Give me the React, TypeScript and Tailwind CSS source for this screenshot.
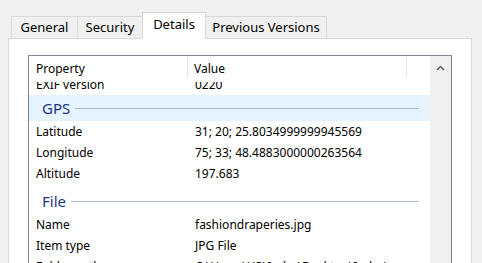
import React from "react";

const font = { fontFamily: '"Noto Sans", "Liberation Sans", sans-serif' };

type Row = { kind: "item"; label: string; value: string } | { kind: "group"; label: string; hover?: boolean; gap?: boolean };

const rows: Row[] = [
  { kind: "item", label: "EXIF version", value: "0220" },
  { kind: "group", label: "GPS", hover: true },
  { kind: "item", label: "Latitude", value: "31; 20; 25.8034999999945569" },
  { kind: "item", label: "Longitude", value: "75; 33; 48.4883000000263564" },
  { kind: "item", label: "Altitude", value: "197.683" },
  { kind: "group", label: "File", gap: true },
  { kind: "item", label: "Name", value: "fashiondraperies.jpg" },
  { kind: "item", label: "Item type", value: "JPG File" },
  { kind: "item", label: "Folder path", value: "C:\\Users\\HP\\Indra\\Desktop\\Indra's" },
];

function Tab({ label, className }: { label: string; className: string }) {
  return (
    <div className={`flex items-center justify-center border-[#d9d9d9] text-[13px] text-black ${className}`}>
      {label}
    </div>
  );
}

function GroupRow({ row }: { row: Extract<Row, { kind: "group" }> }) {
  return (
    <div className={row.gap ? "pt-[4px]" : ""}>
      <div className={`flex h-[26px] items-center gap-[5px] pl-[13px] pr-[11px] ${row.hover ? "bg-[#e5f3ff]" : ""}`}>
        <span className="text-[15px] leading-none text-[#1c3683]">{row.label}</span>
        <div className="h-px flex-1 bg-[#a9b9d0]" />
      </div>
    </div>
  );
}

function ItemRow({ row, first }: { row: Extract<Row, { kind: "item" }>; first?: boolean }) {
  return (
    <div className={`flex h-[21px] items-center text-[12px] text-black ${first ? "-mt-[8px]" : ""}`}>
      <div className="w-[159px] shrink-0 whitespace-nowrap pl-[7px]">{row.label}</div>
      <div className="whitespace-nowrap pl-[7px]">{row.value}</div>
    </div>
  );
}

export default function App() {
  return (
    <div className="h-[263px] w-[482px] overflow-hidden bg-[#f0f0f0] pl-[8px] pr-[10px] pt-[12px]" style={font}>
      <div className="relative z-10 flex h-[26px] items-end pl-[3px]">
        <Tab label="General" className="h-[22px] w-[66px] border-l border-t bg-[#f0f0f0]" />
        <Tab label="Security" className="h-[22px] w-[65px] border-l border-t bg-[#f0f0f0]" />
        <Tab label="Details" className="-mb-px h-[27px] w-[64px] border-l border-r border-t bg-white pb-[3px]" />
        <Tab label="Previous Versions" className="h-[22px] w-[121px] border-r border-t bg-[#f0f0f0]" />
      </div>

      <div className="h-[240px] border border-[#d9d9d9] bg-white pl-[19px] pr-[19px] pt-[16px]">
        <div className="flex h-[220px] border border-[#828790]">
          <div className="flex min-w-0 flex-1 flex-col">
            <div className="flex h-[26px] shrink-0 items-center text-[12px] text-black">
              <div className="flex h-[22px] w-[159px] shrink-0 items-center self-start border-r border-[#e5e5e5] pl-[7px] pt-[4px]">Property</div>
              <div className="flex h-[22px] w-[219px] shrink-0 items-center self-start border-r border-[#e5e5e5] pl-[6px] pt-[4px]">Value</div>
            </div>
            <div className="flex-1 overflow-hidden">
              {rows.map((row, i) =>
                row.kind === "group" ? (
                  <GroupRow key={row.label} row={row} />
                ) : (
                  <ItemRow key={row.label} row={row} first={i === 0} />
                )
              )}
            </div>
          </div>
          <div className="flex w-[21px] shrink-0 justify-center bg-[#f0f0f0] pt-[9px]">
            <svg width="9" height="6" viewBox="0 0 9 6">
              <path d="M1 5 L4.5 1.5 L8 5" fill="none" stroke="#606060" strokeWidth="1.5" />
            </svg>
          </div>
        </div>
      </div>
    </div>
  );
}
